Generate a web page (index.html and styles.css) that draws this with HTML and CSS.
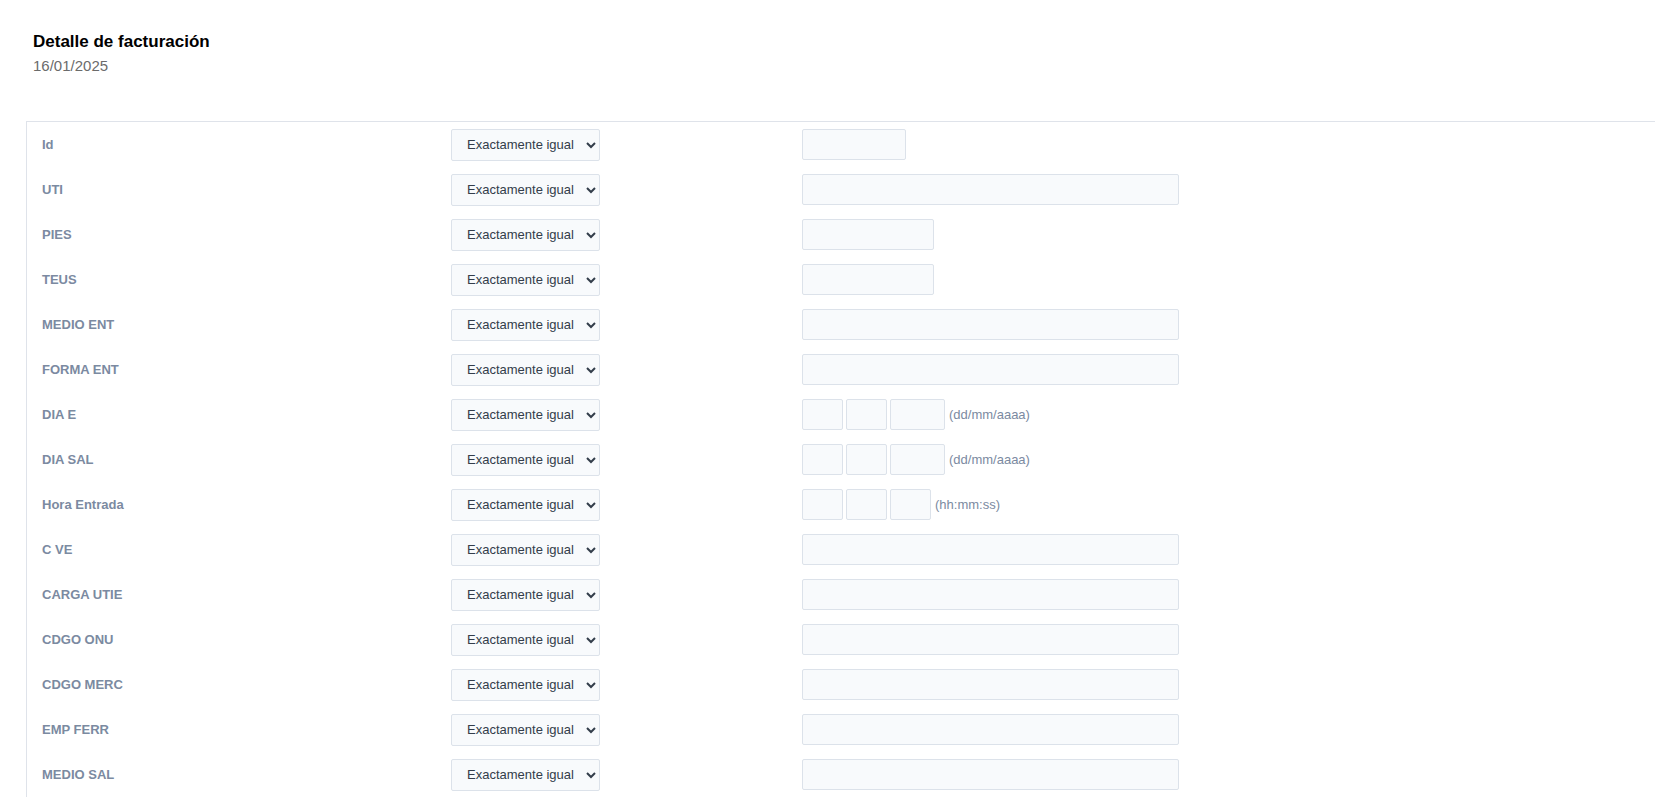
FILE: index.html
```html
<!DOCTYPE html>
<html lang="es">
<head>
    <meta charset="UTF-8">
    <meta name="viewport" content="width=device-width, initial-scale=1.0">
    <title>Detalle de facturación</title>
    <link rel="stylesheet" href="styles.css">
</head>
<body>

<div class="header">
    <h2>Detalle de facturación</h2>
    <div class="date">16/01/2025</div>
</div>

<div class="filters">
    <div class="row">
        <label>Id</label>
        <select><option>Exactamente igual</option></select>
        <div><input type="text" class="w-id"></div>
    </div>
    <div class="row">
        <label>UTI</label>
        <select><option>Exactamente igual</option></select>
        <div><input type="text" class="w-full"></div>
    </div>
    <div class="row">
        <label>PIES</label>
        <select><option>Exactamente igual</option></select>
        <div><input type="text" class="w-num"></div>
    </div>
    <div class="row">
        <label>TEUS</label>
        <select><option>Exactamente igual</option></select>
        <div><input type="text" class="w-num"></div>
    </div>
    <div class="row">
        <label>MEDIO ENT</label>
        <select><option>Exactamente igual</option></select>
        <div><input type="text" class="w-full"></div>
    </div>
    <div class="row">
        <label>FORMA ENT</label>
        <select><option>Exactamente igual</option></select>
        <div><input type="text" class="w-full"></div>
    </div>
    <div class="row">
        <label>DIA E</label>
        <select><option>Exactamente igual</option></select>
        <div class="parts">
            <input type="text" class="w-2"><input type="text" class="w-2"><input type="text" class="w-4"><span class="hint">(dd/mm/aaaa)</span>
        </div>
    </div>
    <div class="row">
        <label>DIA SAL</label>
        <select><option>Exactamente igual</option></select>
        <div class="parts">
            <input type="text" class="w-2"><input type="text" class="w-2"><input type="text" class="w-4"><span class="hint">(dd/mm/aaaa)</span>
        </div>
    </div>
    <div class="row">
        <label>Hora Entrada</label>
        <select><option>Exactamente igual</option></select>
        <div class="parts">
            <input type="text" class="w-2"><input type="text" class="w-2"><input type="text" class="w-2"><span class="hint">(hh:mm:ss)</span>
        </div>
    </div>
    <div class="row">
        <label>C VE</label>
        <select><option>Exactamente igual</option></select>
        <div><input type="text" class="w-full"></div>
    </div>
    <div class="row">
        <label>CARGA UTIE</label>
        <select><option>Exactamente igual</option></select>
        <div><input type="text" class="w-full"></div>
    </div>
    <div class="row">
        <label>CDGO ONU</label>
        <select><option>Exactamente igual</option></select>
        <div><input type="text" class="w-full"></div>
    </div>
    <div class="row">
        <label>CDGO MERC</label>
        <select><option>Exactamente igual</option></select>
        <div><input type="text" class="w-full"></div>
    </div>
    <div class="row">
        <label>EMP FERR</label>
        <select><option>Exactamente igual</option></select>
        <div><input type="text" class="w-full"></div>
    </div>
    <div class="row">
        <label>MEDIO SAL</label>
        <select><option>Exactamente igual</option></select>
        <div><input type="text" class="w-full"></div>
    </div>
</div>

</body>
</html>
```

FILE: styles.css
```css
body {
    margin: 0;
    font-family: "Liberation Sans", Arial, sans-serif;
    background-color: #fff;
    color: #000;
    overflow: hidden;
}
.header {
    padding: 32px 0 0 33px;
    height: 121px;
    box-sizing: border-box;
}
.header h2 {
    margin: 0;
    font-size: 17px;
    font-weight: bold;
    line-height: 20px;
}
.date {
    margin-top: 5px;
    font-size: 15px;
    line-height: 17px;
    color: #6b6b6b;
}
.filters {
    margin-left: 26px;
    border-top: 1px solid #dfe3ea;
    border-left: 1px solid #dfe3ea;
}
.row {
    display: grid;
    grid-template-columns: 409px 351px 1fr;
    align-items: center;
    height: 45px;
    padding-left: 15px;
}
label {
    font-size: 13px;
    font-weight: bold;
    color: #7b8aa1;
}
select {
    width: 149px;
    height: 32px;
    padding: 0 6px 0 11px;
    font-family: "Liberation Sans", Arial, sans-serif;
    font-size: 13px;
    color: #333d4a;
    background-color: #f8fafc;
    border: 1px solid #dce2ea;
    border-radius: 2px;
}
input[type="text"] {
    box-sizing: border-box;
    height: 31px;
    margin: 0;
    padding: 0 6px;
    background-color: #f8fafc;
    border: 1px solid #dce2ea;
    border-radius: 2px;
    vertical-align: middle;
}
.w-id {
    width: 104px;
}
.w-num {
    width: 132px;
}
.w-full {
    width: 377px;
}
.parts {
    display: flex;
    align-items: center;
    gap: 3px;
}
.w-2 {
    width: 41px;
}
.w-4 {
    width: 55px;
}
.hint {
    margin-left: 1px;
    font-size: 13px;
    color: #7b8aa1;
}
```
